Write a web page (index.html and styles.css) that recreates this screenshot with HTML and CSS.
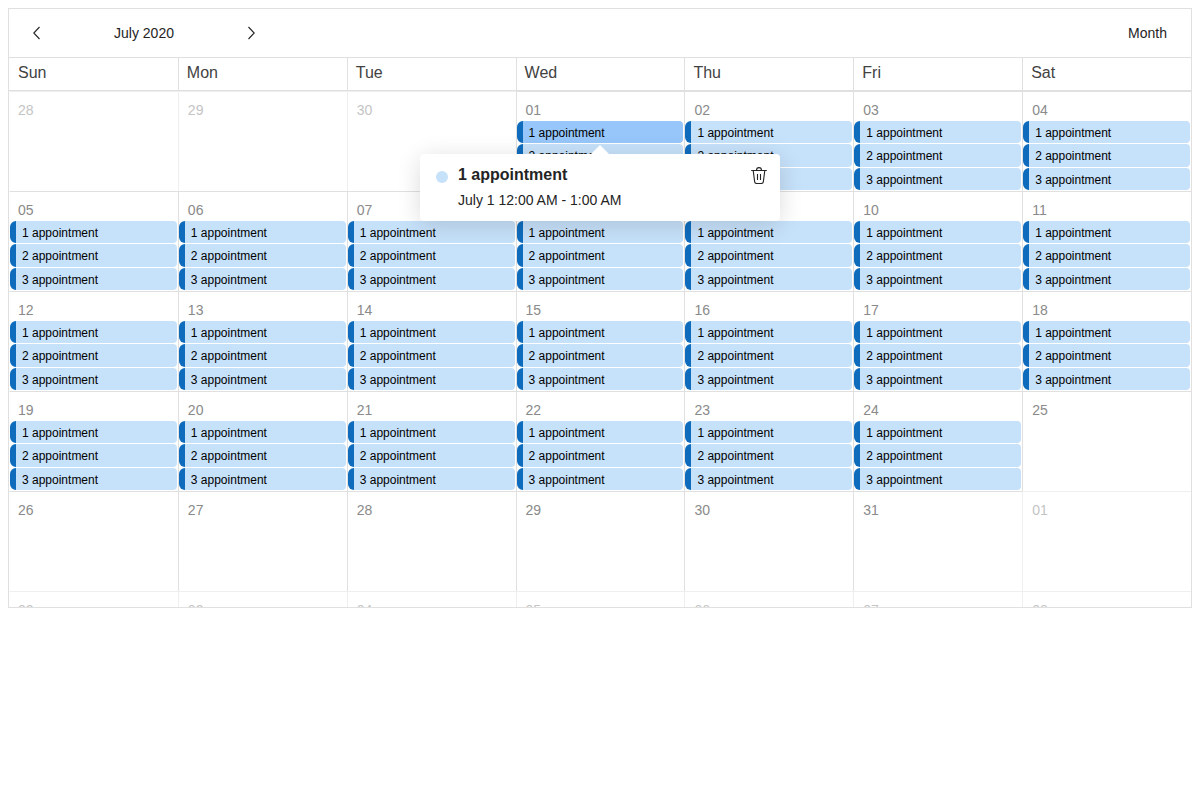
FILE: index.html
```html
<!DOCTYPE html>
<html lang="en">
<head>
<meta charset="utf-8">
<title>Scheduler</title>
<link rel="stylesheet" href="styles.css">
</head>
<body>
<main class="scheduler">
  <header class="toolbar">
    <nav class="navigator">
      <button class="icon-button" type="button" aria-label="Previous month">
        <svg width="16" height="16" viewBox="0 0 16 16"><path d="M11.500 2 5.800 8l5.700 6"/></svg>
      </button>
      <button class="text-button period" type="button">July 2020</button>
      <button class="icon-button" type="button" aria-label="Next month">
        <svg width="16" height="16" viewBox="0 0 16 16"><path d="M4.500 2 10.200 8l-5.700 6"/></svg>
      </button>
    </nav>
    <button class="text-button" type="button">Month</button>
  </header>
  <table class="month">
    <thead class="weekdays">
      <tr class="week">
        <th>Sun</th><th>Mon</th><th>Tue</th><th>Wed</th><th>Thu</th><th>Fri</th><th>Sat</th>
      </tr>
    </thead>
    <tbody id="weeks"></tbody>
  </table>
</main>
<template id="tooltip">
  <div class="tooltip" role="dialog" aria-label="Appointment details">
    <span class="marker"></span>
    <div class="details">
      <div class="title">1 appointment</div>
      <div class="time">July 1 12:00 AM - 1:00 AM</div>
    </div>
    <button class="delete" type="button" aria-label="Delete">
      <svg width="18" height="18" viewBox="0 0 18 18"><path d="M1.200 4.500h15.600M6.500 4.500a2.500 2.900 0 0 1 5 0M3.200 4.500l1.400 10.900c.1 1.300.8 2.100 2 2.100h4.800c1.200 0 1.900-.8 2-2.100l1.400-10.900M7.500 8v6M10.500 8v6"/></svg>
    </button>
  </div>
</template>
<script src="app.js"></script>
</body>
</html>
```
FILE: styles.css
```css
* {
  box-sizing: border-box;
}

body {
  margin: 8px;
  background: #fff;
  color: #242424;
  font: 14px/20px "Liberation Sans", Arial, sans-serif;
}

button {
  margin: 0;
  padding: 0;
  border: 0;
  background: none;
  color: inherit;
  font: inherit;
  cursor: pointer;
}

svg {
  display: block;
  fill: none;
  stroke: #242424;
  stroke-width: 1.1;
}

.scheduler {
  display: flex;
  flex-direction: column;
  height: 75vh;
  overflow: hidden;
  border: 1px solid #e0e0e0;
}

.toolbar {
  display: flex;
  flex: none;
  align-items: center;
  justify-content: space-between;
  height: 49px;
  padding: 0 24px 0 11px;
  border-bottom: 1px solid #e0e0e0;
}

.navigator {
  display: flex;
  align-items: center;
}

.icon-button {
  display: grid;
  place-items: center;
  width: 32px;
  height: 32px;
}

.period {
  width: 184px;
}

.month,
.month thead,
.month tbody {
  display: block;
}

.week {
  display: grid;
  grid-template-columns: repeat(7, minmax(0, 1fr));
}

.weekdays {
  border-bottom: 1px solid #e0e0e0;
}

.weekdays th {
  padding: 5px 0 7px 8px;
  border-left: 1px solid #e0e0e0;
  color: #424242;
  font-size: 16px;
  font-weight: 400;
  text-align: left;
}

.weekdays th:first-child,
.day:first-child {
  border-left-color: transparent;
}

.day {
  height: 100px;
  padding: 8px 0 0;
  border-top: 1px solid #e0e0e0;
  border-left: 1px solid #e0e0e0;
}

.day.other {
  border-top-color: #efefef;
  border-left-color: #efefef;
}

.day.other:first-child {
  border-left-color: transparent;
}

.date {
  display: block;
  padding-left: 9px;
  color: #8a8a8a;
}

.day:first-child .date {
  padding-left: 8px;
}

.other .date {
  color: #c4c4c4;
}

.appointments {
  position: relative;
  display: flex;
  flex-direction: column;
  gap: 1px;
  height: 69px;
  margin: 1px 1px 0 0;
}

.appointment {
  flex: 1;
  padding: 2px 0 0 6px;
  border-left: 6px solid #0f6cbd;
  border-radius: 6px 4px 4px 6px;
  background: #c6e1fa;
  color: #000;
  font-size: 12px;
  text-align: left;
}

.appointment.selected {
  background: #96c6fa;
}

.tooltip {
  position: absolute;
  z-index: 1;
  top: 33px;
  left: 50%;
  display: flex;
  align-items: flex-start;
  width: 360px;
  margin-left: -180px;
  padding: 11px 12px 10px 16px;
  border-radius: 4px;
  background: #fff;
  box-shadow: 0 4px 24px rgba(0, 0, 0, 0.14);
}

.tooltip::before {
  content: "";
  position: absolute;
  bottom: 100%;
  left: 50%;
  margin-left: -9px;
  border: solid transparent;
  border-width: 0 9px 9px;
  border-bottom-color: #fff;
}

.marker {
  width: 12px;
  height: 12px;
  margin: 6px 10px 0 0;
  border-radius: 50%;
  background: #c6e1fa;
}

.details {
  flex: 1;
}

.title {
  margin-bottom: 6px;
  font-size: 16px;
  font-weight: 700;
}

.time {
  line-height: 18px;
  margin-bottom: 2px;
}

.delete {
  margin-top: 1px;
}
```
FILE: app.js
```js
const FIRST_VISIBLE = new Date(2020, 5, 28);
const MONTH = 6;
const LAST_BOOKED_DATE = 24;
const weeks = document.getElementById("weeks");

for (let w = 0; w < 6; w++) {
  const row = document.createElement("tr");
  row.className = "week";
  for (let d = 0; d < 7; d++) {
    const date = new Date(FIRST_VISIBLE);
    date.setDate(date.getDate() + w * 7 + d);
    const inMonth = date.getMonth() === MONTH;
    const cell = document.createElement("td");
    cell.className = inMonth ? "day" : "day other";
    const label = document.createElement("span");
    label.className = "date";
    label.textContent = String(date.getDate()).padStart(2, "0");
    cell.append(label);
    if (inMonth && date.getDate() <= LAST_BOOKED_DATE) {
      const list = document.createElement("div");
      list.className = "appointments";
      for (let n = 1; n <= 3; n++) {
        const item = document.createElement("button");
        item.type = "button";
        item.className = "appointment";
        item.textContent = n + " appointment";
        list.append(item);
      }
      if (date.getDate() === 1) {
        list.firstElementChild.classList.add("selected");
        list.append(document.getElementById("tooltip").content.cloneNode(true));
      }
      cell.append(list);
    }
    row.append(cell);
  }
  weeks.append(row);
}
```
